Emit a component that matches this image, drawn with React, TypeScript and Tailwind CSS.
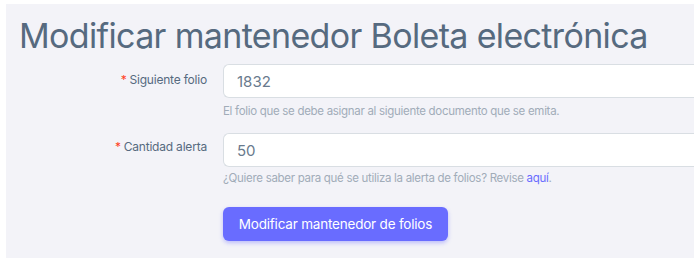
export default function App() {
  return (
    <div className="min-h-[262px] bg-white px-[6px] pt-[4px] pb-[4px] font-['Inter',sans-serif]">
      <div className="overflow-hidden bg-[#f3f3f8] pb-[17px]">
        <h1 className="pl-[13px] pt-[9px] text-[34px] font-normal leading-[46px] tracking-[-0.65px] text-[#566a7f]">
          Modificar mantenedor Boleta electrónica
        </h1>

        <div className="mt-[5px] grid grid-cols-[217px_1fr]">
          {/* Siguiente folio */}
          <label className="pr-[16px] pt-[8px] text-right text-[12px] leading-[16px] tracking-[-0.2px] text-[#566a7f]">
            <span className="mr-[3px] text-[#ff3e1d]">*</span>
            Siguiente folio
          </label>
          <div>
            <input
              defaultValue="1832"
              className="block h-[34px] w-full rounded-l-[6px] border border-r-0 border-[#d9dee3] bg-white px-[13px] text-[15px] text-[#697a8d] outline-none"
            />
            <p className="mt-[3px] text-[11.5px] leading-[20px] tracking-[-0.3px] text-[#a1acb8]">
              El folio que se debe asignar al siguiente documento que se emita.
            </p>
          </div>

          {/* Cantidad alerta */}
          <label className="mt-[12px] pr-[16px] pt-[6px] text-right text-[12px] leading-[16px] tracking-[-0.2px] text-[#566a7f]">
            <span className="mr-[3px] text-[#ff3e1d]">*</span>
            Cantidad alerta
          </label>
          <div className="mt-[12px]">
            <input
              defaultValue="50"
              className="block h-[34px] w-full rounded-l-[6px] border border-r-0 border-[#d9dee3] bg-white px-[13px] text-[15px] text-[#697a8d] outline-none"
            />
            <p className="mt-[1px] text-[11.5px] leading-[20px] tracking-[-0.3px] text-[#a1acb8]">
              ¿Quiere saber para qué se utiliza la alerta de folios? Revise{" "}
              <a className="text-[#696cff]">aquí</a>.
            </p>
          </div>

          <div />
          <div className="mt-[19px]">
            <button className="h-[34px] w-[225px] rounded-[6px] bg-[#696cff] text-[13.5px] tracking-[-0.2px] text-white shadow-[0_2px_4px_rgba(105,108,255,0.4)]">
              Modificar mantenedor de folios
            </button>
          </div>
        </div>
      </div>
    </div>
  );
}
